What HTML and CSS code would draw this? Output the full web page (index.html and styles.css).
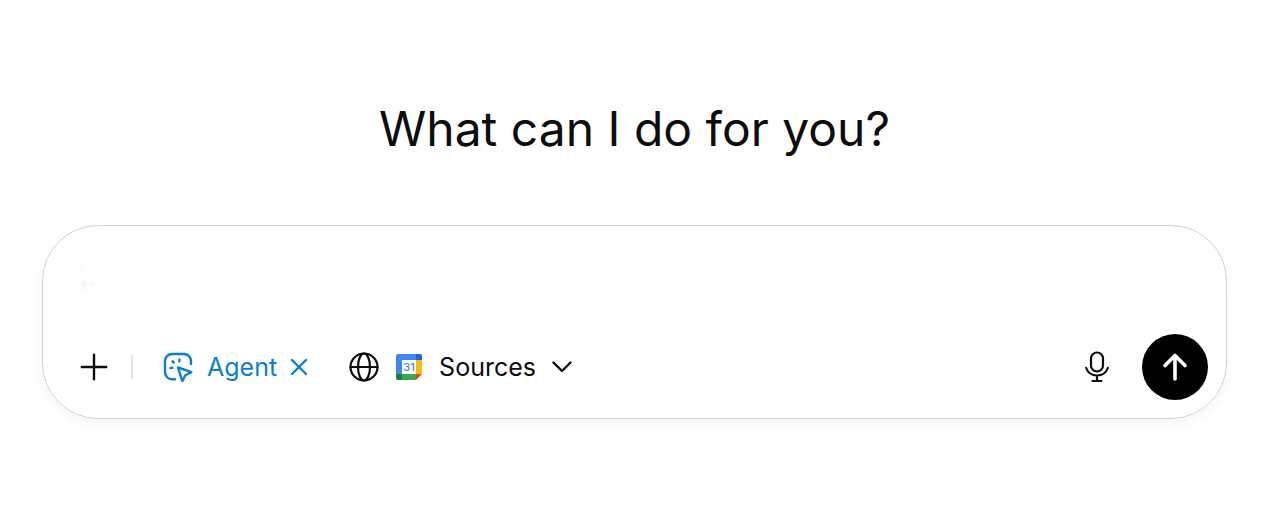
FILE: index.html
```html
<!DOCTYPE html>
<html lang="en">
  <head>
    <meta charset="UTF-8" />
    <meta name="viewport" content="width=device-width, initial-scale=1.0" />
    <title>What can I do for you?</title>
    <link rel="stylesheet" href="styles.css">
  </head>
  <body>
    <main class="page">
      <h1 class="title">What can I do for you?</h1>

      <form class="composer">
        <div class="prompt">
          <svg class="prompt-fade" viewBox="0 0 16 36" aria-hidden="true">
            <path d="M2 9v6M14 3v6M2 21v10l4-4 3-2zM11 24l3 8v-9z" />
          </svg>
          <textarea class="prompt-input" aria-label="Message"></textarea>
        </div>

        <div class="toolbar">
          <button class="icon-button" type="button" aria-label="Add">
            <svg class="icon" viewBox="0 0 28 28">
              <path d="M14 1.800v24.400M1.800 14h24.400" />
            </svg>
          </button>

          <span class="divider"></span>

          <button class="agent" type="button">
            <svg class="icon agent-icon" viewBox="0 0 30 30">
              <path d="M12 27.300H9A7 7 0 0 1 2 20.300V9a7 7 0 0 1 7-7h12a7 7 0 0 1 7 7v3" />
              <path d="M15 15.500l13.300 4.700-6 3-3 6z" />
              <path d="M9.600 9.200l1.200 1.400M16.500 7.500l-.2 1.800M7.500 16l1.800-.2" />
            </svg>
            <span>Agent</span>
          </button>
          <button class="icon-button remove" type="button" aria-label="Remove agent">
            <svg class="icon remove-icon" viewBox="0 0 18 18">
              <path d="M2 2l14 14M16 2L2 16" />
            </svg>
          </button>

          <button class="sources" type="button">
            <svg class="icon globe-icon" viewBox="0 0 30 30">
              <circle cx="15" cy="15" r="13.500" />
              <ellipse cx="15" cy="15" rx="6" ry="13.500" />
              <path d="M1.500 15h27" />
            </svg>
            <svg class="calendar-icon" viewBox="0 0 26 26">
              <path fill="#4285f4" d="M2 0h18v6H6v14H0V2a2 2 0 0 1 2-2z" />
              <path fill="#1967d2" d="M20 0h4a2 2 0 0 1 2 2v4h-6z" />
              <path fill="#fbbc04" d="M20 6h6v14h-6z" />
              <path fill="#188038" d="M0 20h6v6H2a2 2 0 0 1-2-2z" />
              <path fill="#34a853" d="M6 20h14v6H6z" />
              <path fill="#ea4335" d="M20 20h6l-6 6z" />
              <path fill="#fff" d="M6 6h14v14H6z" />
              <text class="calendar-day" x="13" y="17">31</text>
            </svg>
            <span>Sources</span>
            <svg class="icon chevron-icon" viewBox="0 0 20 12">
              <path d="M1.500 1.500L10 10l8.500-8.500" />
            </svg>
          </button>

          <button class="icon-button mic" type="button" aria-label="Dictate">
            <svg class="icon mic-icon" viewBox="0 0 24 32">
              <rect x="6" y="1.500" width="12" height="19" rx="6" />
              <path d="M1.200 17c1.600 4.500 5.500 7.500 10.800 7.500s9.200-3 10.800-7.500M12 24.500V30M7.500 30h9" />
            </svg>
          </button>

          <button class="send" type="submit" aria-label="Send">
            <svg class="icon send-icon" viewBox="0 0 24 28">
              <path d="M12 26V2.500M2 12.500l10-10 10 10" />
            </svg>
          </button>
        </div>
      </form>
    </main>
  </body>
</html>
```
FILE: styles.css
```css
:root {
  --text-color: #0d0d0d;
  --accent-color: #0a7fd0;
  --border-color: #d4d4d4;
}

* {
  margin: 0;
  padding: 0;
  box-sizing: border-box;
}

body {
  font-family: Inter, "Liberation Sans", sans-serif;
  background-color: #fff;
  color: var(--text-color);
}

.page {
  padding: 97px 53px 40px 42px;
}

.title {
  margin-bottom: 64px;
  font-size: 48px;
  font-weight: 400;
  line-height: 64px;
  text-align: center;
}

.composer {
  padding: 32px 18px 18px 37px;
  border: 1px solid var(--border-color);
  border-radius: 56px;
  box-shadow: 0 6px 12px rgba(0, 0, 0, 0.04);
}

.prompt {
  display: flex;
  height: 76px;
}

.prompt-fade {
  width: 16px;
  height: 36px;
  fill: #f6f6f6;
  stroke: #f8f8f8;
  stroke-width: 2;
  filter: blur(1px);
}

.prompt-input {
  flex: 1;
  border: none;
  outline: none;
  resize: none;
  background: transparent;
  font: inherit;
  font-size: 25px;
}

.toolbar {
  display: flex;
  align-items: center;
}

button {
  display: flex;
  align-items: center;
  border: none;
  background: none;
  color: inherit;
  font: inherit;
  font-size: 25px;
  line-height: 32px;
  cursor: pointer;
}

.icon {
  width: 28px;
  height: 28px;
  fill: none;
  stroke: currentColor;
  stroke-width: 2.4;
  stroke-linecap: round;
  stroke-linejoin: round;
}

.divider {
  width: 2px;
  height: 24px;
  margin: 0 30px 0 23px;
  background-color: #e6e6e6;
}

.agent {
  gap: 14px;
  color: var(--accent-color);
}

.agent-icon,
.globe-icon {
  width: 30px;
  height: 30px;
}

.remove {
  margin-left: 13px;
  color: var(--accent-color);
}

.remove-icon {
  width: 18px;
  height: 18px;
}

.sources {
  margin-left: 41px;
}

.globe-icon {
  stroke-width: 2.2;
}

.calendar-icon {
  width: 26px;
  height: 26px;
  margin: 0 17px;
}

.calendar-day {
  fill: #4285f4;
  font-size: 11px;
  font-weight: 500;
  text-anchor: middle;
}

.chevron-icon {
  width: 20px;
  height: 12px;
  margin-left: 16px;
}

.mic {
  margin-left: auto;
}

.mic-icon {
  width: 24px;
  height: 32px;
  stroke-width: 2.2;
}

.send {
  justify-content: center;
  width: 66px;
  height: 66px;
  margin-left: 33px;
  border-radius: 50%;
  background-color: #000;
  color: #fff;
}

.send-icon {
  width: 24px;
  height: 28px;
  stroke-width: 3.6;
}
```
